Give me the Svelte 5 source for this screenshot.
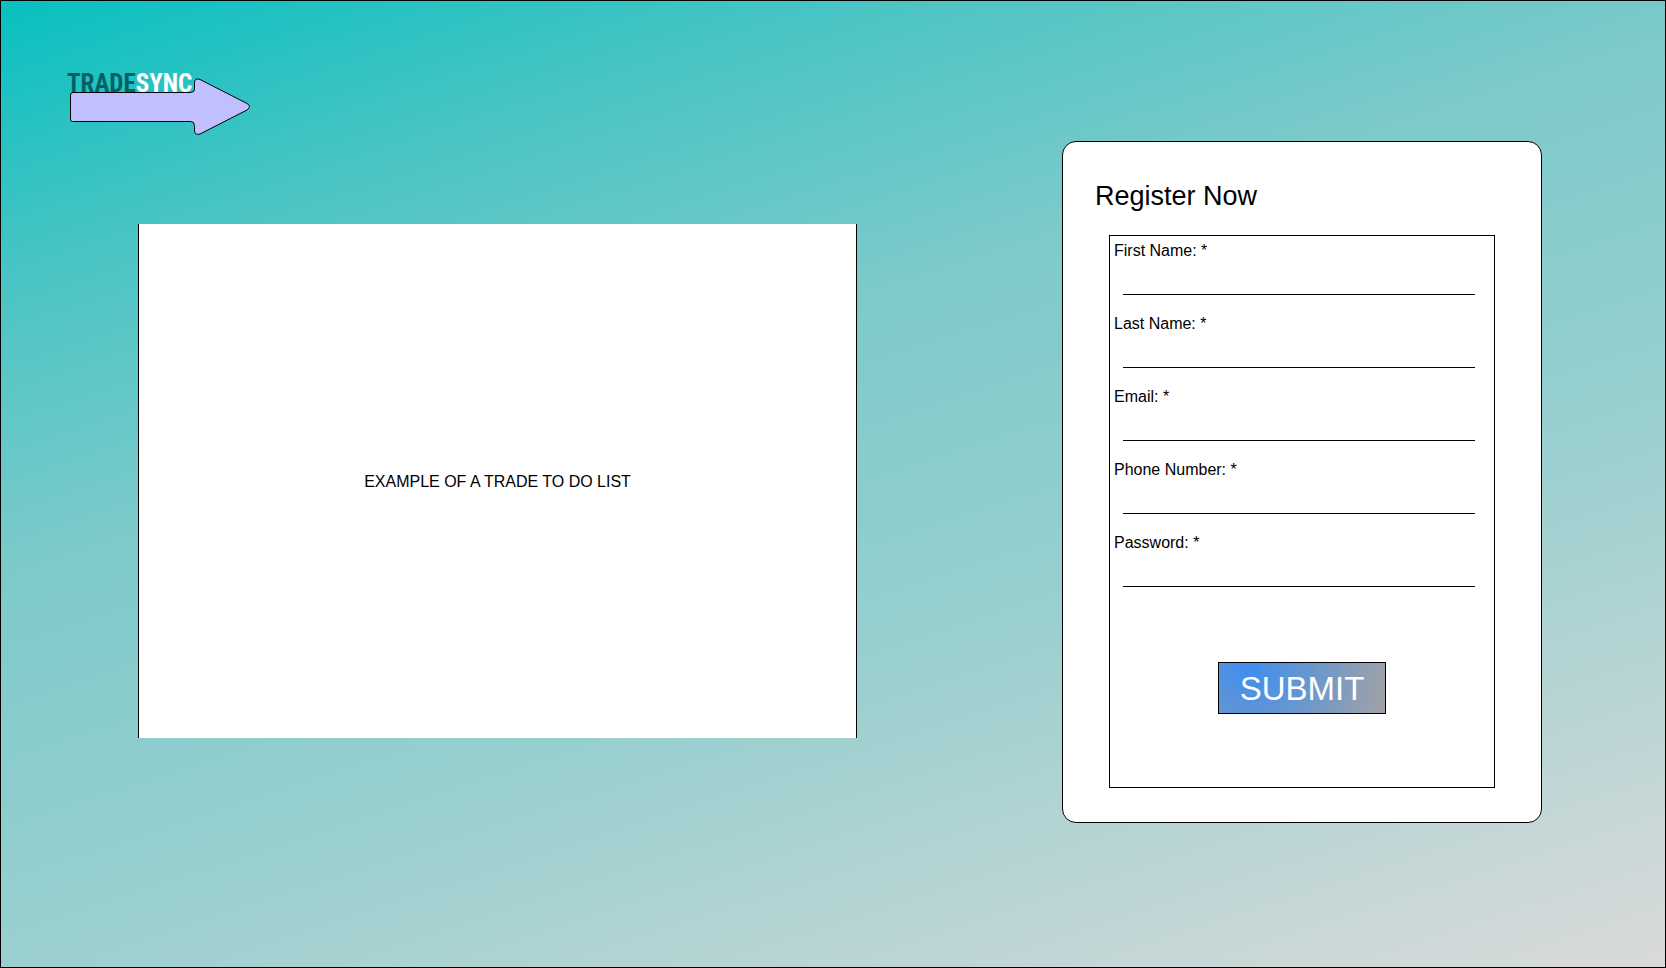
<script>
  const fields = [
    { id: 'first', label: 'First Name: *', type: 'text' },
    { id: 'last', label: 'Last Name: *', type: 'text' },
    { id: 'email', label: 'Email: *', type: 'email' },
    { id: 'phone', label: 'Phone Number: *', type: 'tel' },
    { id: 'password', label: 'Password: *', type: 'password' }
  ];
</script>

<div class="page">
  <header>
    <svg class="logo" width="186" height="74" viewBox="0 0 186 74" aria-hidden="true">
      <path
        d="M7 27.5H125.500Q129.500 27.500 129.500 24V17.500Q130 12.500 135 14.500L182 38.500Q187 41.500 182 45L135 69Q130 70.500 129.500 66V60.500Q129.500 56.500 125.500 56.500H7.500Q5.500 56.500 5.500 54V30Q5.500 27.500 8 27.500Z"
        fill="#c0bfff"
        stroke="#000"
      />
    </svg>
    <div class="wordmark"><span>TRADE</span>SYNC</div>
  </header>

  <main>
    <section class="example">EXAMPLE OF A TRADE TO DO LIST</section>

    <section class="card">
      <h1>Register Now</h1>
      <form onsubmit={(e) => e.preventDefault()}>
        {#each fields as field}
          <div class="field">
            <label for={field.id}>{field.label}</label>
            <input id={field.id} type={field.type} required />
          </div>
        {/each}
        <button type="submit">SUBMIT</button>
      </form>
    </section>
  </main>
</div>

<style>
  :global(body) {
    margin: 0;
  }
  .page {
    box-sizing: border-box;
    min-height: 100vh;
    border: 1px solid #000;
    background: linear-gradient(162deg, #08c0c0, #48c4c4 18%, #7dcaca 38%, #98cfcf 62%, #dadada);
    color: #000;
    font-family: 'Liberation Sans', Arial, sans-serif;
    font-size: 16px;
  }
  header {
    position: relative;
    height: 74px;
    padding: 64px 0 0 64px;
  }
  .logo {
    display: block;
  }
  .wordmark {
    position: absolute;
    left: 66px;
    top: 65px;
    color: #fff;
    font-family: 'Roboto Condensed', 'Liberation Sans Narrow', 'Roboto', sans-serif;
    font-size: 25px;
    font-weight: 700;
    line-height: 36px;
  }
  .wordmark span {
    color: #036064;
  }
  main {
    display: flex;
    justify-content: space-between;
    align-items: flex-start;
    padding: 2px 123px 0 137px;
  }
  .example {
    box-sizing: border-box;
    display: flex;
    align-items: center;
    justify-content: center;
    flex: 0 1 719px;
    min-height: 514px;
    margin-top: 83px;
    padding-top: 2px;
    border: solid #000;
    border-width: 0 1px;
    background: #fff;
  }
  .card {
    box-sizing: border-box;
    flex: 0 1 480px;
    padding: 37px 46px 34px;
    border: 1px solid #000;
    border-radius: 14px;
    background: #fff;
  }
  h1 {
    margin: 0 0 22px -14px;
    font-size: 27px;
    font-weight: 400;
    line-height: 34px;
  }
  form {
    box-sizing: border-box;
    min-height: 553px;
    padding: 5px 4px 4px;
    border: 1px solid #000;
  }
  .field {
    padding-bottom: 19px;
  }
  label {
    display: block;
    line-height: 20px;
  }
  input {
    box-sizing: border-box;
    display: block;
    width: calc(100% - 24px);
    height: 34px;
    margin: 0 0 0 9px;
    padding: 12px 0 0;
    border: 0;
    border-bottom: 1px solid #000;
    background: transparent;
    font: inherit;
    outline: 0;
  }
  button {
    display: block;
    height: 52px;
    margin: 56px auto 0;
    padding: 2px 21px 0;
    border: 1px solid #000;
    background: radial-gradient(circle at 18% 10%, #3f8eef, #a2a2a4);
    color: #fff;
    font: inherit;
    font-size: 33px;
  }
</style>
